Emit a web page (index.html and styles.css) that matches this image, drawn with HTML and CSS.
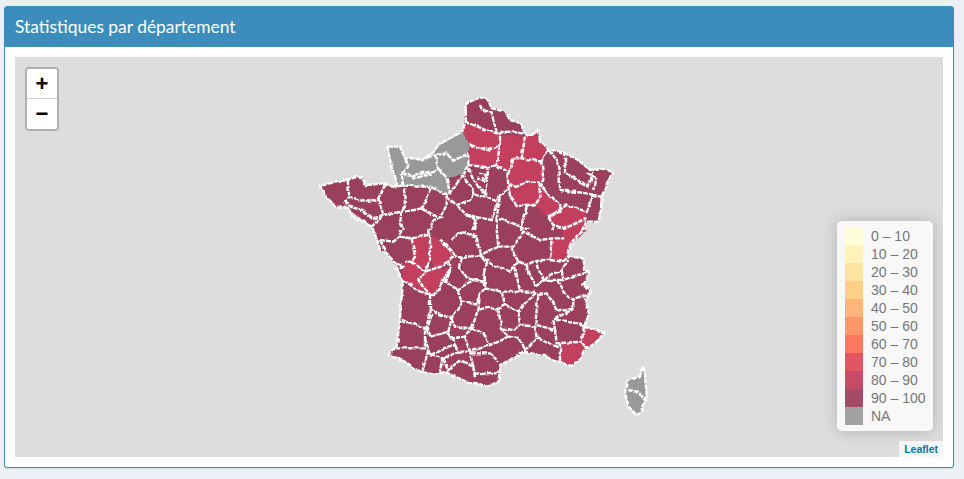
FILE: index.html
```html
<!DOCTYPE html>
<html lang="fr">
<head>
<meta charset="utf-8">
<title>Statistiques par département</title>
<link rel="stylesheet" href="styles.css">
</head>
<body>
<section class="box">
  <header class="box-header"><h3 class="box-title">Statistiques par département</h3></header>
  <div class="box-body">
    <div class="map">
      <svg class="france" width="928" height="400" viewBox="15 57 928 400" aria-hidden="true">
        <defs>
          <filter id="rough" x="280" y="70" width="400" height="370" filterUnits="userSpaceOnUse" color-interpolation-filters="sRGB">
            <feTurbulence type="fractalNoise" baseFrequency="0.11" numOctaves="2" seed="4" result="n"/>
            <feDisplacementMap in="SourceGraphic" in2="n" scale="4" xChannelSelector="R" yChannelSelector="G"/>
          </filter>
        </defs>
        <g class="rough">
        <g transform="translate(300 90) scale(.33333)">
          <polygon class="dark" points="240,480 215,410 135,350 105,350 85,330 60,290 105,275 140,270 165,262 185,265 200,285 250,280 290,290 310,290 400,290 490,130 497,40 535,25 560,20 575,55 615,65 630,90 665,100 672,130 690,140 715,120 720,155 745,175 770,185 805,195 840,215 870,240 900,235 940,245 925,270 905,320 903,360 895,395 860,400 835,440 805,480"/>
          <polygon class="red" points="487,125 500,98 545,115 590,130 600,135 600,165 565,180 510,165"/>
          <polygon class="red" points="510,165 565,180 600,165 590,225 565,232 505,225"/>
          <polygon class="red" points="600,135 675,140 665,205 640,205 625,250 590,225 600,165"/>
          <polygon class="red" points="675,140 700,140 715,120 720,155 745,178 725,215 665,205"/>
          <polygon class="red" points="640,205 665,205 725,215 728,270 715,280 680,275 650,290 625,285 622,250"/>
          <polygon class="red" points="625,285 650,290 680,275 715,280 722,320 705,345 650,345 630,320"/>
          <polygon class="red" points="715,280 780,340 780,365 745,380 705,345 722,320"/>
          <polygon class="red" points="780,365 800,345 860,365 860,385 795,415 760,405 745,380"/>
          <polygon class="red" points="795,415 860,390 865,395 830,445 810,470 785,435"/>
          <polygon class="grey" points="262,170 300,170 315,205 325,225 305,250 310,285 290,290 280,255"/>
          <polygon class="grey" points="315,205 365,212 405,195 415,240 340,255 305,250 325,225"/>
          <polygon class="grey" points="395,190 420,160 487,125 510,165 505,190 440,190 405,195"/>
          <polygon class="grey" points="405,195 440,190 505,190 505,225 490,255 440,265 415,240"/>
          <polygon class="grey" points="340,255 415,240 440,265 450,310 430,312 395,290 350,290 310,285 305,250"/>
          <polyline class="line" points="215,410 165,385 135,350 105,350 85,330 60,290 105,275 140,270 165,262 185,265 200,285 250,280 290,290"/>
          <polyline class="line" points="240,480 230,445 215,410"/>
          <polyline class="line" points="262,170 300,170 315,205 365,212 395,190 420,160 487,125 497,95 497,40 535,25 560,20 575,55 615,65 630,90 665,100 672,130 690,140 715,120 720,155 745,175 770,185 805,195 840,215 870,240 900,235 940,245 925,270 905,320 903,360 895,395 860,395 835,440 805,480"/>
          <polyline class="line" points="262,170 280,255 290,290 310,285 305,250 325,225 315,205"/>
          <polyline class="line" points="305,250 340,255 415,240 405,195 440,190 460,212 505,190"/>
          <polyline class="line" points="415,240 440,265 450,310 430,312 395,290 350,290 310,285"/>
          <polyline class="line" points="340,255 345,265 395,250"/>
          <polyline class="line" points="505,190 505,225 490,255 440,320 440,345 420,385"/>
          <polyline class="line" points="535,50 575,70 590,125"/>
          <polyline class="line" points="497,95 545,115 590,130 620,125 670,130"/>
          <polyline class="line" points="510,165 565,180 600,165 600,130"/>
          <polyline class="line" points="505,225 565,232 590,225 625,250 640,205 665,205 725,215"/>
          <polyline class="line" points="675,140 665,205"/>
          <polyline class="line" points="600,165 590,225"/>
          <polyline class="line" points="745,178 725,215 730,270 720,285 780,345 782,365 745,382"/>
          <polyline class="line" points="622,250 625,285 650,290 680,275 715,280 722,320 705,345 650,345 630,320 625,285"/>
          <polyline class="line" points="705,345 680,350 665,410 590,385 600,315 625,295"/>
          <polyline class="line" points="745,382 800,345 860,365 880,315 905,320"/>
          <polyline class="line" points="745,382 760,405 795,415 860,385"/>
          <polyline class="line" points="795,415 785,435 770,470"/>
          <polyline class="line" points="750,180 778,225 780,300 860,310 880,315"/>
          <polyline class="line" points="795,200 795,250 865,290 885,235"/>
          <polyline class="line" points="860,250 885,265 880,300"/>
          <polyline class="line" points="140,270 145,325 165,325 205,335 235,325 255,285"/>
          <polyline class="line" points="135,330 145,350 190,360 215,385 245,380"/>
          <polyline class="line" points="235,325 250,375 215,410"/>
          <polyline class="line" points="250,375 305,365 300,400 315,440 250,450"/>
          <polyline class="line" points="312,295 315,350 305,365"/>
          <polyline class="line" points="315,365 365,355 420,385 400,390 385,430 315,440"/>
          <polyline class="line" points="395,295 365,355"/>
          <polyline class="line" points="440,320 470,345 510,330 525,310 490,260"/>
          <polyline class="line" points="505,235 530,285 555,310 565,235"/>
          <polyline class="line" points="535,250 560,255 550,272 535,265"/>
          <polyline class="line" points="525,310 555,320 590,330"/>
          <polyline class="line" points="470,345 500,375 575,390 600,315"/>
          <polyline class="line" points="500,375 530,390 515,425 480,435 450,465 385,430"/>
          <polyline class="line" points="530,390 525,420 530,480"/>
          <polyline class="line" points="590,385 590,450 600,475"/>
          <polyline class="line" points="665,410 660,440 600,475"/>
          <polyline class="line" points="680,350 670,380 665,410 745,450 760,410"/>
          <polyline class="line" points="670,435 690,455 740,445 760,480"/>
        </g>
        <g transform="translate(380 230) scale(.33333)">
          <polygon class="dark" points="0,0 610,0 570,45 565,80 610,85 615,120 627,128 610,165 635,185 615,205 625,240 618,275 612,290 672,310 645,340 615,360 595,395 575,408 540,395 510,390 495,375 450,370 430,365 390,390 360,405 355,460 320,470 275,460 225,440 195,425 170,435 120,425 75,395 45,380 25,375 50,350 60,270 70,190 70,150 50,105 38,100 15,60"/>
          <polygon class="red" points="545,0 620,0 575,45 552,30"/>
          <polygon class="red" points="515,25 550,25 570,45 565,80 545,95 515,85"/>
          <polygon class="red" points="95,25 145,15 150,90 135,125 95,95"/>
          <polygon class="red" points="150,10 180,30 225,75 205,95 165,115 150,90"/>
          <polygon class="red" points="75,95 95,95 135,125 115,150 150,195 120,185 70,150"/>
          <polygon class="red" points="135,125 165,115 210,115 190,150 165,195 150,195 115,150"/>
          <polygon class="red" points="612,290 670,312 640,340 620,358 605,335"/>
          <polygon class="red" points="540,345 605,335 620,358 595,395 575,408 540,395"/>
          <polygon class="grey" points="790,410 795,440 800,490 785,550 770,555 745,530 735,490 740,455 775,440"/>
          <polyline class="line" points="0,30 15,60 38,95 70,110 50,120 70,150 65,190 60,270 50,350 25,375 45,380 75,395 120,425 170,435 195,425 225,440 275,460 320,470 355,460 360,405 390,390 430,365 450,370 495,375 510,390 540,395 575,408 595,395 615,360 645,340 672,310 612,290 618,275 625,240 615,205 635,185 610,165 627,128 615,120 610,85 565,80 570,45 610,0"/>
          <polyline class="line" points="790,410 795,440 800,490 785,550 770,555 745,530 735,490 740,455 775,440 790,410"/>
          <polyline class="line" points="745,480 770,485 795,510"/>
          <polyline class="line" points="0,30 40,35 60,20 60,0"/>
          <polyline class="line" points="60,20 95,25 145,15 145,0"/>
          <polyline class="line" points="95,25 105,80 95,95 75,95"/>
          <polyline class="line" points="150,10 150,90 135,125 115,150 150,195 165,195 190,150 210,115 205,95 225,75 180,30"/>
          <polyline class="line" points="95,95 135,125 165,115 205,95"/>
          <polyline class="line" points="70,150 120,185 150,195 150,235 170,250 215,265 245,220 235,180 195,155 210,115"/>
          <polyline class="line" points="215,30 240,5 290,20 300,75 270,80 245,85 225,75"/>
          <polyline class="line" points="245,85 240,115 260,145 310,155 320,100 300,75 355,50 350,0"/>
          <polyline class="line" points="355,50 400,50 430,5 480,30 515,25 550,25"/>
          <polyline class="line" points="300,75 330,100 390,125 415,95 395,55"/>
          <polyline class="line" points="415,95 440,105 470,90 510,90 515,25"/>
          <polyline class="line" points="510,90 545,95 565,80"/>
          <polyline class="line" points="440,105 445,130 465,170 495,150 480,130 470,90"/>
          <polyline class="line" points="495,150 500,140 545,120 565,90"/>
          <polyline class="line" points="545,120 550,150 590,135 627,128"/>
          <polyline class="line" points="530,150 550,185 580,210 635,185"/>
          <polyline class="line" points="495,150 530,150 550,150"/>
          <polyline class="line" points="405,110 420,185 465,185"/>
          <polyline class="line" points="315,120 315,175 365,185 420,185"/>
          <polyline class="line" points="230,180 280,150 310,155 315,175 300,190 290,220 245,215"/>
          <polyline class="line" points="300,190 295,240 325,230 350,240 375,225 365,185"/>
          <polyline class="line" points="375,225 415,245 465,190 475,195"/>
          <polyline class="line" points="415,245 420,285 465,290 475,195 500,190 520,215 530,245 580,235 580,210"/>
          <polyline class="line" points="470,285 525,300 520,270 580,235"/>
          <polyline class="line" points="525,300 530,340 605,335 612,290 585,275 525,270"/>
          <polyline class="line" points="150,235 140,295 65,270"/>
          <polyline class="line" points="155,255 140,300 150,320 205,305 215,265"/>
          <polyline class="line" points="135,300 135,355 45,355"/>
          <polyline class="line" points="135,325 150,375 225,345 205,305"/>
          <polyline class="line" points="205,305 210,325 255,320 275,295 225,290 215,265"/>
          <polyline class="line" points="275,295 295,240"/>
          <polyline class="line" points="275,295 310,310 330,345 385,320 365,295 355,240"/>
          <polyline class="line" points="365,295 400,300 420,285"/>
          <polyline class="line" points="385,320 420,325 435,360 470,325 465,290"/>
          <polyline class="line" points="470,325 530,350 540,345 540,395"/>
          <polyline class="line" points="605,335 620,358"/>
          <polyline class="line" points="255,320 270,365 330,345"/>
          <polyline class="line" points="225,345 235,365 190,385 205,425"/>
          <polyline class="line" points="270,365 235,365"/>
          <polyline class="line" points="270,370 330,370 355,395"/>
          <polyline class="line" points="285,435 355,425"/>
          <polyline class="line" points="205,420 240,390 280,410 285,445"/>
          <polyline class="line" points="280,410 270,370"/>
          <polyline class="line" points="145,360 125,430"/>
          <polyline class="line" points="150,375 190,385 180,435"/>
        </g>
        </g>
      </svg>
      <div class="zoom">
        <a class="zoom-btn zoom-in">+</a>
        <a class="zoom-btn">−</a>
      </div>
      <div class="legend">
        <div class="row"><i class="swatch c0"></i><span>0 – 10</span></div>
        <div class="row"><i class="swatch c1"></i><span>10 – 20</span></div>
        <div class="row"><i class="swatch c2"></i><span>20 – 30</span></div>
        <div class="row"><i class="swatch c3"></i><span>30 – 40</span></div>
        <div class="row"><i class="swatch c4"></i><span>40 – 50</span></div>
        <div class="row"><i class="swatch c5"></i><span>50 – 60</span></div>
        <div class="row"><i class="swatch c6"></i><span>60 – 70</span></div>
        <div class="row"><i class="swatch c7"></i><span>70 – 80</span></div>
        <div class="row"><i class="swatch c8"></i><span>80 – 90</span></div>
        <div class="row"><i class="swatch c9"></i><span>90 – 100</span></div>
        <div class="row"><i class="swatch c10"></i><span>NA</span></div>
      </div>
      <div class="attribution"><a>Leaflet</a></div>
    </div>
  </div>
</section>
</body>
</html>
```
FILE: styles.css
```css
* { box-sizing: border-box; }
html, body { height: 100%; }
body {
  margin: 0;
  padding: 6px 10px 11px 4px;
  background: #ecf0f5;
  overflow: hidden;
}
.box {
  height: 462px;
  background: #fff;
  border: 1px solid #3c8dbc;
  border-radius: 3px;
  box-shadow: 0 1px 1px rgba(0,0,0,.1);
  display: flex;
  flex-direction: column;
}
.box-header {
  height: 40px;
  background: #3c8dbc;
  color: #fff;
  padding: 0 10px;
  display: flex;
  align-items: center;
}
.box-title {
  margin: 0;
  font: 400 17.4px/1.1 Lato, sans-serif;
}
.box-body {
  flex: 1;
  padding: 10px;
}
.map {
  position: relative;
  width: 928px;
  height: 400px;
  background: #ddd;
  overflow: hidden;
}
.france { position: absolute; left: 0; top: 0; }
.rough { filter: url(#rough); }
.dark { fill: #9a405c; }
.red { fill: #c2405e; }
.grey { fill: #999; }
.line {
  fill: none;
  stroke: #fff;
  stroke-width: 2.4;
  stroke-dasharray: 5 1;
  vector-effect: non-scaling-stroke;
}
.zoom {
  position: absolute;
  left: 10px;
  top: 10px;
  width: 34px;
  border: 2px solid rgba(0,0,0,.2);
  border-radius: 4px;
  background-clip: padding-box;
}
.zoom-btn {
  display: block;
  width: 30px;
  height: 30px;
  background: #fff;
  color: #000;
  font: 700 22px/30px "Liberation Sans", Arial, sans-serif;
  text-align: center;
}
.zoom-in {
  border-bottom: 1px solid #ccc;
  border-radius: 2px 2px 0 0;
}
.zoom-btn:last-child { border-radius: 0 0 2px 2px; }
.legend {
  position: absolute;
  right: 10px;
  bottom: 26px;
  width: 96px;
  padding: 6px 8px;
  background: rgba(255,255,255,.8);
  border-radius: 5px;
  box-shadow: 0 0 15px rgba(0,0,0,.2);
  color: #777;
  font: 14px/18px "Liberation Sans", Arial, sans-serif;
}
.row { display: flex; height: 18px; white-space: nowrap; }
.swatch { width: 18px; height: 18px; margin-right: 8px; flex: none; }
.c0 { background: #fefedb; }
.c1 { background: #fef2bd; }
.c2 { background: #fde3a0; }
.c3 { background: #fdcf87; }
.c4 { background: #feb577; }
.c5 { background: #fe9768; }
.c6 { background: #fc775f; }
.c7 { background: #e25664; }
.c8 { background: #c84968; }
.c9 { background: #a54b67; }
.c10 { background: #a2a2a2; }
.attribution {
  position: absolute;
  right: 0;
  bottom: 0;
  height: 16px;
  padding: 0 5px;
  background: rgba(255,255,255,.7);
  font: 700 10.5px/16px "Liberation Sans", Arial, sans-serif;
  color: #0078a8;
}
```
